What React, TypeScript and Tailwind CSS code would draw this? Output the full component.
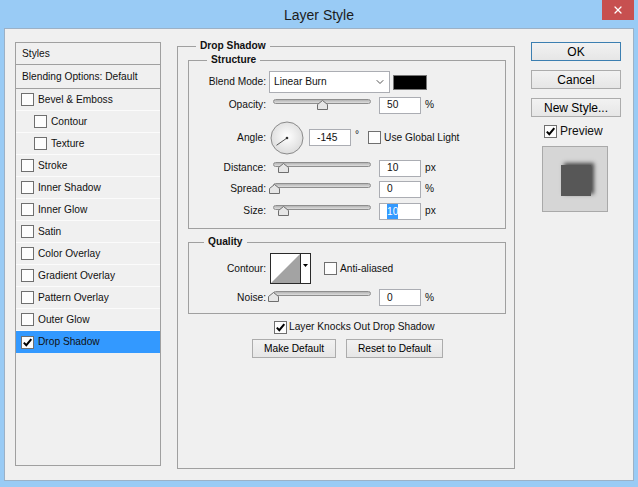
import { ChevronDown, X } from "lucide-react";

const FONT = { fontFamily: '"Liberation Sans", Arial, sans-serif' };

function Check({ checked }: { checked?: boolean }) {
  return (
    <span className="w-[13px] h-[13px] shrink-0 border border-[#6f6f6f] bg-[#fdfdfd] flex items-center justify-center">
      {checked && (
        <svg width="11" height="11" viewBox="0 0 11 11">
          <path d="M1.8 5.6 L4.3 8.2 L9.3 2.2" fill="none" stroke="#000" strokeWidth="2" />
        </svg>
      )}
    </span>
  );
}

// thumb offset in px from the left of the slider box
function Slider({ pos }: { pos: number }) {
  return (
    <div className="relative w-[108px] h-[11px] shrink-0">
      <div className="absolute left-[5px] right-[5px] top-0 h-[5px] rounded-full border border-[#8e8e8e] bg-gradient-to-b from-[#b4b4b4] to-[#dedede]" />
      <svg className="absolute top-[1px]" style={{ left: pos }} width="11" height="10" viewBox="0 0 11 10">
        <polygon points="5.5,0.5 10.5,4.5 10.5,9.5 0.5,9.5 0.5,4.5" fill="#e6e6e6" stroke="#6e6e6e" />
      </svg>
    </div>
  );
}

function NumBox({ value, selected }: { value: string; selected?: boolean }) {
  return (
    <div className="w-[42px] h-[17px] shrink-0 border border-[#abadb3] bg-white flex items-center pl-[7px]">
      <span className={selected ? "bg-[#3399ff] text-white leading-[15px]" : ""}>{value}</span>
    </div>
  );
}

function Label({ text }: { text: string }) {
  return <span className="w-[77px] shrink-0 text-right">{text}</span>;
}

function SliderRow({ label, pos, value, unit, h, selected }: { label: string; pos: number; value: string; unit: string; h: string; selected?: boolean }) {
  return (
    <div className={`flex items-center ${h}`}>
      <Label text={label} />
      <div className="ml-[2px] mt-[-2px]">
        <Slider pos={pos} />
      </div>
      <div className="ml-[3px]">
        <NumBox value={value} selected={selected} />
      </div>
      <span className="ml-[4px]">{unit}</span>
    </div>
  );
}

function Btn({ children, className }: { children: React.ReactNode; className: string }) {
  return (
    <button className={`border bg-gradient-to-b from-[#f2f2f2] to-[#e6e6e6] flex items-center justify-center text-black ${className}`}>
      {children}
    </button>
  );
}

const styles = [
  { name: "Bevel & Emboss" },
  { name: "Contour", indent: true },
  { name: "Texture", indent: true },
  { name: "Stroke" },
  { name: "Inner Shadow" },
  { name: "Inner Glow" },
  { name: "Satin" },
  { name: "Color Overlay" },
  { name: "Gradient Overlay" },
  { name: "Pattern Overlay" },
  { name: "Outer Glow" },
  { name: "Drop Shadow", active: true },
];

export default function App() {
  return (
    <div className="w-[638px] h-[487px] bg-[#99cbf5] flex flex-col text-[10.2px] text-[#111]" style={FONT}>
      {/* title bar */}
      <div className="h-[28px] shrink-0 grid grid-cols-[1fr_auto_1fr]">
        <div />
        <div className="text-[14px] text-[#1c1c1c] pt-[5px]">Layer Style</div>
        <div className="flex justify-end mr-[4px]">
          <div className="w-[32px] h-[20px] bg-[#c75050] flex items-center justify-center">
            <X size={12} color="#fff" strokeWidth={2.5} />
          </div>
        </div>
      </div>

      {/* dialog body */}
      <div className="mx-[4px] h-[453px] border border-[#9cb1c6] bg-[#f0f0f0] flex items-start">
        {/* styles list */}
        <div className="ml-[10px] mt-[13px] w-[146px] h-[424px] border border-[#a0a0a0] flex flex-col">
          <div className="h-[22px] border-b border-[#a0a0a0] flex items-center pl-[6px]">Styles</div>
          <div className="h-[24px] border-b border-[#a0a0a0] flex items-center pl-[6px]">Blending Options: Default</div>
          {styles.map((s) => (
            <div
              key={s.name}
              className={`h-[22px] flex items-center gap-[4px] ${s.indent ? "pl-[18px]" : "pl-[5px]"} ${
                s.active ? "bg-[#3399ff]" : "border-b border-[#fbfbfb]"
              }`}
            >
              <Check checked={s.active} />
              <span>{s.name}</span>
            </div>
          ))}
        </div>

        {/* drop shadow settings */}
        <fieldset className="ml-[16px] mt-[10px] w-[338px] h-[430px] border border-[#a0a0a0] pl-[10px] pr-[8px]">
          <legend className="ml-[8px] px-[4px] font-bold leading-[14px]">Drop Shadow</legend>

          <fieldset className="border border-[#a0a0a0] pt-[4px] pb-[6px]">
            <legend className="ml-[18px] px-[4px] font-bold leading-[14px]">Structure</legend>
            <div className="flex items-center h-[22px]">
              <Label text="Blend Mode:" />
              <div className="ml-[3px] w-[121px] h-[22px] border border-[#abadb3] bg-white flex items-center justify-between pl-[4px] pr-[3px]">
                <span>Linear Burn</span>
                <ChevronDown size={12} color="#555" />
              </div>
              <div className="ml-[3px] w-[34px] h-[15px] bg-black border border-[#777]" />
            </div>
            <SliderRow label="Opacity:" pos={49} value="50" unit="%" h="h-[24px]" />
            <div className="flex items-center h-[41px]">
              <Label text="Angle:" />
              <svg className="ml-[4px] shrink-0" width="34" height="34" viewBox="0 0 34 34">
                <defs>
                  <radialGradient id="dial" cx="50%" cy="45%" r="60%">
                    <stop offset="0%" stopColor="#ffffff" />
                    <stop offset="100%" stopColor="#d9d9d9" />
                  </radialGradient>
                </defs>
                <circle cx="17" cy="17" r="16" fill="url(#dial)" stroke="#8a8a8a" />
                <line x1="17" y1="17" x2="6.5" y2="24.3" stroke="#555" strokeWidth="1" />
                <circle cx="17" cy="17" r="1.3" fill="#333" />
              </svg>
              <div className="ml-[5px]">
                <NumBox value="-145" />
              </div>
              <span className="ml-[4px] mt-[-5px]">°</span>
              <div className="ml-[9px]">
                <Check />
              </div>
              <span className="ml-[3px]">Use Global Light</span>
            </div>
            <SliderRow label="Distance:" pos={10} value="10" unit="px" h="h-[20px]" />
            <SliderRow label="Spread:" pos={1} value="0" unit="%" h="h-[22px]" />
            <SliderRow label="Size:" pos={10} value="10" unit="px" h="h-[22px]" selected />
          </fieldset>

          <fieldset className="mt-[6px] border border-[#a0a0a0] pt-[2px] pb-[4px]">
            <legend className="ml-[15px] px-[4px] font-bold leading-[14px]">Quality</legend>
            <div className="flex items-center h-[35px]">
              <Label text="Contour:" />
              <div className="ml-[4px] w-[41px] h-[31px] border border-[#2a2a2a] bg-white flex">
                <svg width="29" height="29" viewBox="0 0 29 29" className="shrink-0">
                  <polygon points="0,29 29,0 29,29" fill="#a3a3a3" />
                </svg>
                <div className="flex-1 border-l border-[#2a2a2a] flex items-start justify-center pt-[10px]">
                  <svg width="5" height="3" viewBox="0 0 5 3">
                    <polygon points="0,0 5,0 2.5,3" fill="#000" />
                  </svg>
                </div>
              </div>
              <div className="ml-[13px]">
                <Check />
              </div>
              <span className="ml-[3px]">Anti-aliased</span>
            </div>
            <SliderRow label="Noise:" pos={0} value="0" unit="%" h="h-[23px]" />
          </fieldset>

          <div className="mt-[6px] h-[14px] flex items-center gap-[2px] ml-[86px]">
            <Check checked />
            <span>Layer Knocks Out Drop Shadow</span>
          </div>
          <div className="mt-[5px] ml-[64px] flex gap-[10px]">
            <Btn className="w-[84px] h-[19px] border-[#acacac]">Make Default</Btn>
            <Btn className="w-[97px] h-[19px] border-[#acacac]">Reset to Default</Btn>
          </div>
        </fieldset>

        {/* buttons + preview */}
        <div className="ml-[16px] mt-[13px] w-[90px] flex flex-col text-[12px]">
          <Btn className="h-[19px] border-[#3c7fb1]">OK</Btn>
          <Btn className="mt-[9px] h-[19px] border-[#acacac]">Cancel</Btn>
          <Btn className="mt-[9px] h-[19px] border-[#acacac]">New Style...</Btn>
          <div className="mt-[7px] ml-[13px] h-[14px] flex items-center gap-[3px]">
            <Check checked />
            <span>Preview</span>
          </div>
          <div className="mt-[8px] ml-[11px] w-[66px] h-[66px] border border-[#a9a9a9] bg-[#d6d6d6] flex items-center justify-center">
            <div className="w-[30px] h-[31px] ml-[2px] mt-[3px] bg-[#575757] shadow-[3px_-2px_4px_rgba(40,40,40,0.8)]" />
          </div>
        </div>
      </div>
    </div>
  );
}
